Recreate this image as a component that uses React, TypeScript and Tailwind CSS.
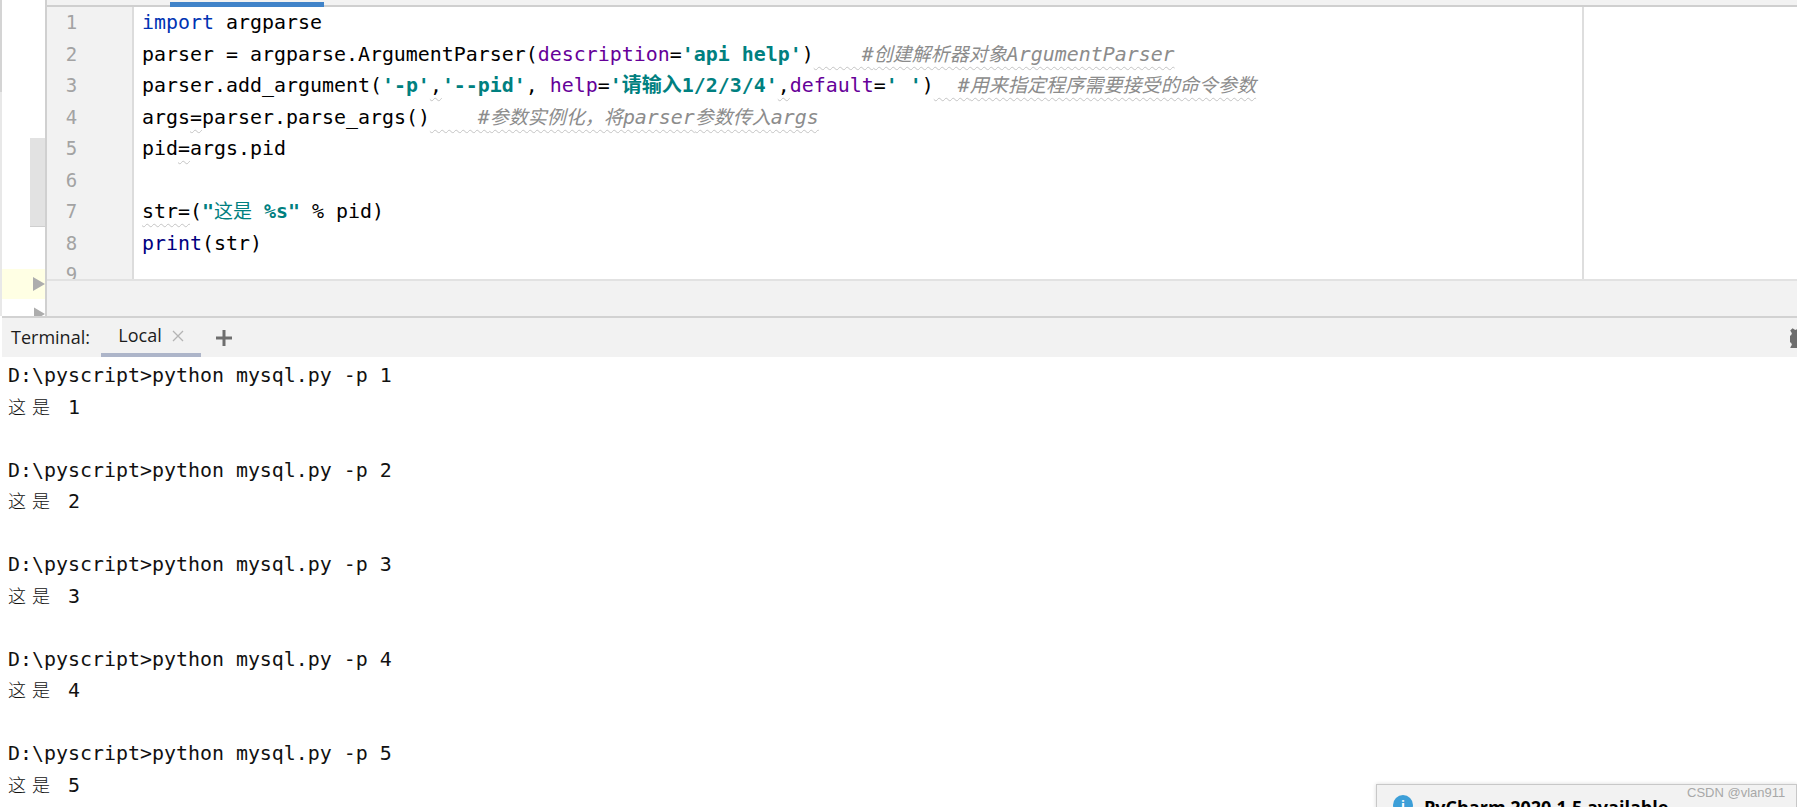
import React from "react";

const mono = "font-['DejaVu_Sans_Mono','Noto_Sans_CJK_SC',monospace]";
const wave = "underline decoration-wavy decoration-[#c4c4c4] decoration-1 underline-offset-[5px]";

const Str = ({ children }: { children: React.ReactNode }) => <span className="text-[#008080] font-bold">{children}</span>;
const Arg = ({ children }: { children: React.ReactNode }) => <span className="text-[#660099]">{children}</span>;
const Cjk = ({ children }: { children: React.ReactNode }) => <span className="text-[19px]">{children}</span>;
const Note = ({ children }: { children: React.ReactNode }) => <span className={wave}>{children}</span>;
const Comment = ({ children }: { children: React.ReactNode }) => (
  <span className={`italic text-[#8c8c8c] ${wave}`}>{children}</span>
);

const codeLines: React.ReactNode[] = [
  <><span className="text-[#0033b3]">import</span> argparse</>,
  <>
    parser = argparse.ArgumentParser(<Arg>description</Arg>=<Str>'api help'</Str>)
    <Comment>{"    #"}<Cjk>创建解析器对象</Cjk>ArgumentParser</Comment>
  </>,
  <>
    parser.add_argument(<Str>'-p'</Str><Note>,</Note><Str>'--pid'</Str>, <Arg>help</Arg>=<Str>'<span className="text-[20px]">请输入</span>1/2/3/4'</Str><Note>,</Note>
    <Arg>default</Arg>=<Str>' '</Str>)
    <Comment>{"  #"}<span className="text-[19.1px]">用来指定程序需要接受的命令参数</span></Comment>
  </>,
  <>
    args<Note>=</Note>parser.parse_args()
    <Comment>{"    #"}<Cjk>参数实例化，将</Cjk>parser<Cjk>参数传入</Cjk>args</Comment>
  </>,
  <>pid<Note>=</Note>args.pid</>,
  <>{" "}</>,
  <><Note>str=</Note>(<Str>"<span className="text-[19px] font-normal">这是</span> %s"</Str> % pid)</>,
  <><span className="text-[#000080]">print</span>(str)</>,
  <>{" "}</>,
];

const TermCn = ({ n }: { n: number }) => (
  <div className="flex">
    <span className="w-[24px] text-[18px] font-light">这</span>
    <span className="w-[24px] text-[18px] font-light">是</span>
    <span>{" "}{n}</span>
  </div>
);

const Triangle = ({ className }: { className: string }) => (
  <svg viewBox="0 0 12 14" className={className}>
    <path d="M0 0 L12 7 L0 14 Z" fill="#adadad" />
  </svg>
);

export default function App() {
  return (
    <div className={`w-[1797px] h-[807px] relative overflow-hidden bg-white text-[19.93px] text-black ${mono}`}>
      {/* upper: editor */}
      <div className="flex h-[316px]">
        <div className="w-[2px] flex flex-col bg-[#e8e8e8]">
          <div className="h-[92px] bg-[#d4d4d4]" />
        </div>
        <div className="w-[45px] border-r-[2px] border-[#d0d0d0] flex flex-col items-end">
          <div className="mt-[138px] w-[15px] h-[89px] bg-[#e2e2e2] border-b-[1px] border-[#cfcfcf]" />
          <div className="mt-[42px] w-full h-[30px] bg-[#ffffe4] flex justify-end pt-[8px]">
            <Triangle className="w-[12px] h-[14px]" />
          </div>
          <div className="mt-[8px] h-[9px] overflow-hidden">
            <Triangle className="w-[11px] h-[14px]" />
          </div>
        </div>
        <div className="flex-1 flex flex-col min-w-0">
          <div className="h-[7px] pt-[2px] pl-[123px] bg-[#f2f2f2] shadow-[inset_0_-2px_0_#cfcfcf]">
            <div className="w-[154px] h-full bg-[#4083c9]" />
          </div>
          <div className="h-[272px] flex overflow-hidden">
            <div className="w-[87px] bg-[#f2f2f2] border-r-[2px] border-[#dcdcdc] flex flex-col items-center pr-[36px] text-[#a3a3a3] text-[19px] leading-[31.5px]">
              {codeLines.map((_, i) => (
                <div key={i} className="h-[31.5px] shrink-0">{i + 1}</div>
              ))}
            </div>
            <div className="w-[1450px] border-r-[2px] border-[#dedede] pl-[8px] leading-[31.5px] whitespace-pre">
              {codeLines.map((line, i) => (
                <div key={i} className="h-[31.5px]">{line}</div>
              ))}
            </div>
            <div className="flex-1" />
          </div>
          <div className="flex-1 bg-[#f2f2f2] border-t-[2px] border-[#e2e2e2]" />
        </div>
      </div>

      {/* terminal tabs */}
      <div className="h-[41px] ml-[2px] bg-[#f2f2f2] border-t-[2px] border-[#d2d2d2] flex items-center pl-[9px] font-['Open_Sans',sans-serif] text-[18px] text-[#1c1c1c] overflow-hidden">
        <span className="w-[90px]">Terminal:</span>
        <div className="w-[100px] h-full flex items-center justify-center gap-[10px] border-b-[4px] border-[#adb5c9]">
          <span>Local</span>
          <svg viewBox="0 0 12 12" className="w-[12px] h-[12px]">
            <path d="M1 1 L11 11 M11 1 L1 11" stroke="#b4b4b4" strokeWidth="1.3" fill="none" />
          </svg>
        </div>
        <svg viewBox="0 0 16 16" className="w-[16px] h-[16px] ml-[15px]">
          <path d="M8 0 V16 M0 8 H16" stroke="#6e6e6e" strokeWidth="3" fill="none" />
        </svg>
        <svg viewBox="0 0 20 20" className="w-[20px] h-[20px] ml-auto mr-[-13px] shrink-0">
          <path
            fillRule="evenodd"
            d="M8 0h4l.6 3 2.2.9 2.6-1.7 2.4 2.4-1.7 2.6.9 2.2 3 .6v4l-3 .6-.9 2.2 1.7 2.6-2.4 2.4-2.6-1.7-2.2.9-.6 3H8l-.6-3-2.2-.9-2.6 1.7-2.4-2.4 1.7-2.6-.9-2.2-3-.6V8l3-.6.9-2.2L.2 2.6 2.6.2l2.6 1.7L7.4 1z M10 7a3 3 0 1 0 0 6 3 3 0 0 0 0-6z"
            fill="#6e6e6e"
          />
        </svg>
      </div>

      {/* terminal output */}
      <div className="ml-[2px] pl-[6px] pt-[3px] leading-[31.5px] whitespace-pre text-[#111]">
        {[1, 2, 3, 4, 5].map((n) => (
          <React.Fragment key={n}>
            <div className="h-[31.5px]">D:\pyscript&gt;python mysql.py -p {n}</div>
            <div className="h-[31.5px]"><TermCn n={n} /></div>
            {n < 5 && <div className="h-[31.5px]" />}
          </React.Fragment>
        ))}
      </div>

      {/* update notification */}
      <div className="absolute left-[1376px] top-[784px] w-[421px] h-[60px] bg-[#f2f2f2] border border-[#c8c8c8] shadow-[0_0_4px_rgba(0,0,0,0.15)] flex items-start pl-[16px] pt-[10px] gap-[11px] font-['Open_Sans',sans-serif]">
        <div className="w-[20px] h-[20px] rounded-full bg-[#3d9fd8] text-white text-[13px] font-bold flex items-center justify-center leading-none">i</div>
        <span className="font-bold text-[18px] leading-[24px] text-black">PyCharm 2020.1.5 available</span>
      </div>
      <div className="absolute left-[1687px] top-[785px] text-[13px] leading-[16px] text-[#a8a8a8] font-['Liberation_Sans',sans-serif]">CSDN @vlan911</div>
    </div>
  );
}
